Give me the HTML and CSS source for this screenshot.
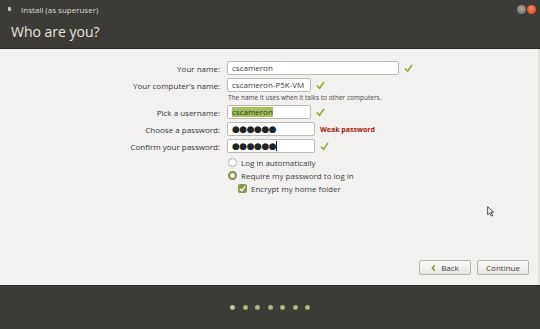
FILE: index.html
```html
<!DOCTYPE html>
<html lang="en">
<head>
	<meta charset="UTF-8">
	<title>Install (as superuser)</title>
	<link rel="stylesheet" href="styles.css">
</head>
<body>
	<div id="win">
		<div class="titlebar">
			<span class="app-dot"></span>
			<span class="title">Install (as superuser)</span>
			<span class="wbtn min"></span>
			<span class="wbtn close"></span>
		</div>
		<div class="header">Who are you?</div>
		<div class="content">
			<div class="row">
				<label>Your name:</label>
				<div class="field long">cscameron</div>
				<svg class="tick" viewBox="0 0 10 10"><path d="M1.5 5.5 L4 8 L8.5 1.5" /></svg>
			</div>
			<div class="row">
				<label>Your computer's name:</label>
				<div class="field short">cscameron-P5K-VM</div>
				<svg class="tick" viewBox="0 0 10 10"><path d="M1.5 5.5 L4 8 L8.5 1.5" /></svg>
			</div>
			<div class="hint">The name it uses when it talks to other computers.</div>
			<div class="row">
				<label>Pick a username:</label>
				<div class="field short"><span class="sel">cscameron</span></div>
				<svg class="tick" viewBox="0 0 10 10"><path d="M1.5 5.5 L4 8 L8.5 1.5" /></svg>
			</div>
			<div class="row">
				<label>Choose a password:</label>
				<div class="field pw"><span class="dots">●●●●●●</span></div>
				<span class="weak">Weak password</span>
			</div>
			<div class="row">
				<label>Confirm your password:</label>
				<div class="field pw"><span class="dots">●●●●●●</span><span class="caret"></span></div>
				<svg class="tick" viewBox="0 0 10 10"><path d="M1.5 5.5 L4 8 L8.5 1.5" /></svg>
			</div>
			<div class="opts">
				<div class="opt"><span class="radio"></span>Log in automatically</div>
				<div class="opt"><span class="radio on"></span>Require my password to log in</div>
				<div class="opt sub"><span class="check"><svg viewBox="0 0 10 10"><path d="M2 5.2 L4.2 7.4 L8 2.6" /></svg></span>Encrypt my home folder</div>
			</div>
			<div class="buttons">
				<button class="btn back"><svg viewBox="0 0 6 10"><path d="M4.5 1.5 L1.5 5 L4.5 8.5" /></svg>Back</button>
				<button class="btn">Continue</button>
			</div>
			<svg class="pointer" viewBox="0 0 12 16"><path d="M1 1 L1 13 L4 10 L6.5 15 L8.5 14 L6 9 L10 9 Z" /></svg>
		</div>
		<div class="footer">
			<span class="dot first"></span>
			<span class="dot"></span>
			<span class="dot"></span>
			<span class="dot"></span>
			<span class="dot"></span>
			<span class="dot"></span>
			<span class="dot"></span>
		</div>
	</div>
</body>
</html>
```
FILE: styles.css
```css
*{
	margin: 0;
	padding: 0;
	box-sizing: border-box;
}
body{
	width: 540px;
	height: 329px;
	overflow: hidden;
	font-family: "Open Sans", "DejaVu Sans", sans-serif;
	font-size: 8px;
	color: #3c3c3c;
	background: #3c3b37;
}
#win{
	display: flex;
	flex-direction: column;
	height: 329px;
}
.titlebar{
	height: 18px;
	display: flex;
	align-items: center;
	background: #3c3b37;
	color: #dfdbd2;
	padding-left: 8px;
	padding-right: 4px;
}
.app-dot{
	width: 3px;
	height: 4px;
	background: #c9c6c0;
	border-radius: 1px;
	margin-right: 10px;
}
.title{
	flex: 1;
	font-size: 8px;
}
.wbtn{
	width: 9px;
	height: 9px;
	border-radius: 50%;
	margin-left: 1px;
}
.wbtn.min{
	background: radial-gradient(circle at 50% 40%, #a7a59f, #6f6d68);
}
.wbtn.close{
	background: radial-gradient(circle at 50% 40%, #f7835c, #d9421b);
}
.header{
	height: 31px;
	background: #3c3b37;
	color: #e8e5df;
	font-size: 14px;
	padding-left: 11px;
	line-height: 28px;
	border-bottom: 1px solid #2b2a27;
}
.content{
	position: relative;
	flex: 1;
	background: #f2f1f0;
	padding-top: 12px;
	border-right: 2px solid #e2e0dd;
}
.row{
	display: flex;
	align-items: center;
	height: 14px;
	margin-bottom: 3px;
}
.row label{
	width: 222px;
	text-align: right;
	padding-right: 2px;
	margin-right: 5px;
	color: #333;
}
.field{
	height: 14px;
	background: #fff;
	border: 1px solid #bdbab5;
	border-radius: 2px;
	padding-left: 4px;
	line-height: 12px;
	display: flex;
	align-items: center;
	white-space: nowrap;
	overflow: hidden;
}
.field.long{
	width: 172px;
}
.field.short{
	width: 84px;
}
.field.pw{
	width: 88px;
}
.sel{
	background: #a5c05f;
	color: #2f3a12;
	line-height: 10px;
}
.dots{
	font-size: 9px;
	letter-spacing: -0.5px;
	color: #222;
}
.caret{
	width: 1px;
	height: 10px;
	background: #222;
}
.tick{
	width: 9px;
	height: 9px;
	margin-left: 5px;
}
.tick path{
	fill: none;
	stroke: #8bab3c;
	stroke-width: 1.8;
	stroke-linecap: round;
}
.weak{
	margin-left: 5px;
	color: #a3170b;
	font-weight: bold;
	font-size: 7px;
}
.hint{
	font-size: 6.5px;
	padding-left: 228px;
	margin-top: -2px;
	margin-bottom: 3px;
	line-height: 9px;
	color: #4a4a4a;
}
.opts{
	padding-left: 228px;
	margin-top: 0;
}
.opt{
	display: flex;
	align-items: center;
	height: 13px;
}
.opt.sub{
	padding-left: 10px;
}
.radio{
	width: 9px;
	height: 9px;
	border-radius: 50%;
	border: 1px solid #b3b0aa;
	background: #fff;
	margin-right: 4px;
}
.radio.on{
	border: 2.5px solid #7e8b4c;
	background: #eef0e4;
}
.check{
	width: 9px;
	height: 9px;
	border-radius: 2px;
	background: #86994a;
	margin-right: 4px;
	display: flex;
}
.check svg{
	width: 9px;
	height: 9px;
}
.check path{
	fill: none;
	stroke: #fff;
	stroke-width: 1.5;
}
.buttons{
	display: flex;
	justify-content: flex-end;
	gap: 6px;
	padding-right: 9px;
	margin-top: 65px;
}
.btn{
	height: 15px;
	width: 52px;
	font-family: inherit;
	font-size: 8px;
	color: #3c3c3c;
	background: linear-gradient(#fbfbfa, #e9e7e4);
	border: 1px solid #b7b4ae;
	border-radius: 2px;
	display: flex;
	align-items: center;
	justify-content: center;
}
.btn.back svg{
	width: 5px;
	height: 8px;
	margin-right: 5px;
}
.btn.back path{
	fill: none;
	stroke: #7a9a2e;
	stroke-width: 1.8;
}
.pointer{
	position: absolute;
	left: 487px;
	top: 157px;
	width: 8px;
	height: 11px;
}
.pointer path{
	fill: #fff;
	stroke: #222;
	stroke-width: 1.2;
}
.footer{
	height: 44px;
	background: #3c3b37;
	display: flex;
	justify-content: center;
	align-items: center;
	gap: 7.5px;
	border-top: 1px solid #2a2926;
}
.dot{
	width: 5px;
	height: 5px;
	border-radius: 50%;
	background: radial-gradient(circle at 50% 45%, #c2c78e, #8f9560);
}
.dot.first{
	background: radial-gradient(circle at 50% 45%, #d4d5b8, #a3a585);
}
```
